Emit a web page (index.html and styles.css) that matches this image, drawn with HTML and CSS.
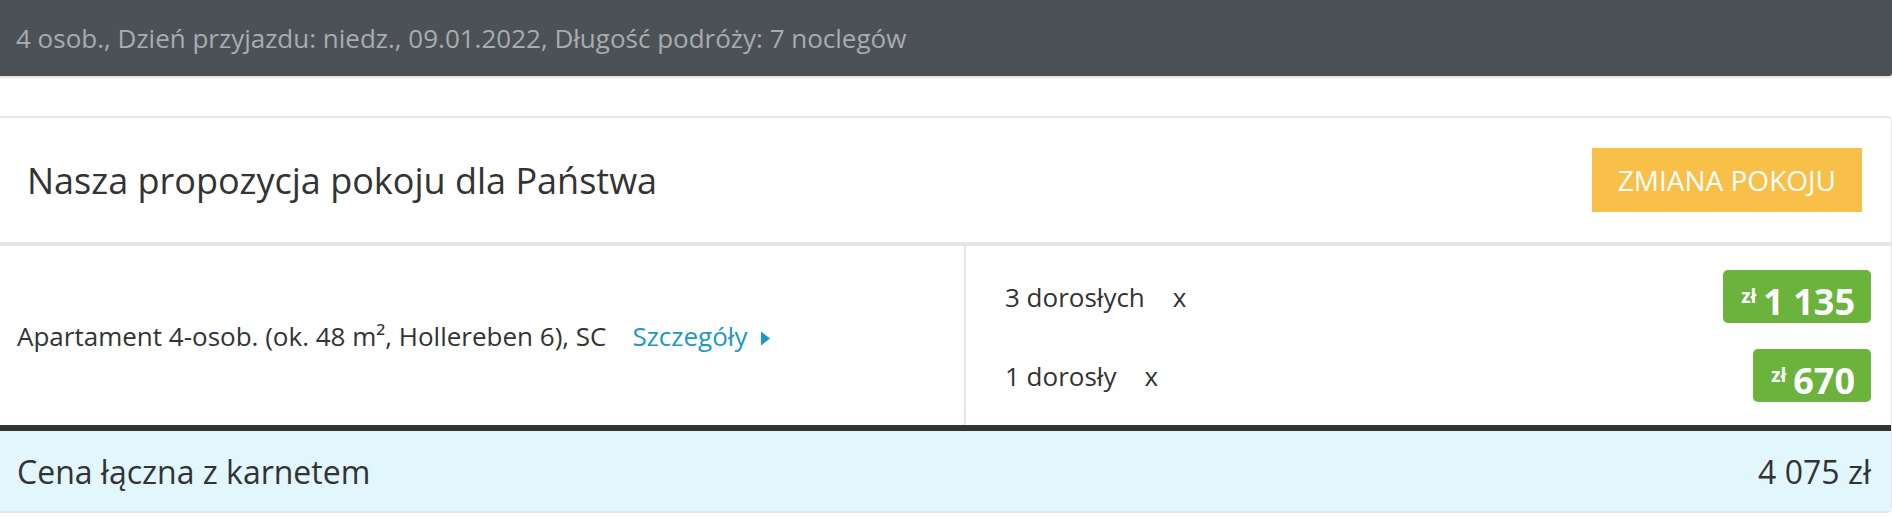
FILE: index.html
```html
<!DOCTYPE html>
<html lang="pl">
<head>
    <meta charset="UTF-8">
    <meta name="viewport" content="width=device-width, initial-scale=1.0">
    <title>Propozycja pokoju</title>
    <link rel="stylesheet" href="styles.css">
</head>
<body>
    <div class="summary-bar">
        4 osob., Dzień przyjazdu: niedz., 09.01.2022, Długość podróży: 7 noclegów
    </div>

    <section class="offer">
        <header class="offer-head">
            <h2 class="offer-title">Nasza propozycja pokoju dla Państwa</h2>
            <button class="btn-change" type="button">ZMIANA POKOJU</button>
        </header>

        <div class="offer-body">
            <div class="room-cell">
                <span class="room-name">Apartament 4-osob. (ok. 48 m², Hollereben 6), SC</span>
                <a class="room-link" href="#">Szczegóły
                    <svg class="caret" width="9" height="15" viewBox="0 0 9 15"><path d="M0 0.5 L9 7.5 L0 14.5 Z" fill="#1e97c6"/></svg>
                </a>
            </div>
            <div class="price-cell">
                <div class="price-row">
                    <span class="guests">3 dorosłych<span class="times">x</span></span>
                    <span class="badge"><span class="cur">zł</span>1 135</span>
                </div>
                <div class="price-row">
                    <span class="guests">1 dorosły<span class="times">x</span></span>
                    <span class="badge"><span class="cur">zł</span>670</span>
                </div>
            </div>
        </div>

        <footer class="offer-total">
            <span>Cena łączna z karnetem</span>
            <span>4 075 zł</span>
        </footer>
    </section>
</body>
</html>
```

FILE: styles.css
```css
* {
    margin: 0;
    padding: 0;
    box-sizing: border-box;
}

body {
    font-family: 'Open Sans', 'Liberation Sans', sans-serif;
    color: #333;
    background: white;
}

.summary-bar {
    height: 76px;
    padding: 0 16px;
    display: flex;
    align-items: center;
    background: #4c5156;
    color: #a7acb0;
    font-size: 26px;
    border-bottom-right-radius: 3px;
    box-shadow: 0 2px 0 #e6e6e6;
}

.offer {
    margin-top: 40px;
    border-top: 2px solid #e6e6e6;
    border-right: 1px solid #e6e6e6;
    border-radius: 0 5px 5px 0;
    overflow: hidden;
}

.offer-head {
    height: 128px;
    padding: 0 29px 0 27px;
    display: flex;
    align-items: center;
    justify-content: space-between;
    border-bottom: 4px solid #e6e6e6;
}

.offer-title {
    font-size: 36px;
    font-weight: 400;
    color: #333;
}

.btn-change {
    height: 64px;
    padding: 0 26px;
    border: none;
    background: #f8c049;
    color: white;
    font-family: inherit;
    font-size: 28px;
}

.offer-body {
    display: flex;
    height: 179px;
}

.room-cell {
    width: 966px;
    padding-left: 17px;
    display: flex;
    align-items: center;
    font-size: 26px;
    border-right: 2px solid #e6e6e6;
}

.room-link {
    margin-left: 26px;
    color: #1e97c6;
    text-decoration: none;
}

.caret {
    margin-left: 7px;
}

.price-cell {
    flex: 1;
    padding: 24px 20px 0 39px;
    display: flex;
    flex-direction: column;
    gap: 26px;
}

.price-row {
    height: 53px;
    display: flex;
    align-items: center;
    justify-content: space-between;
    font-size: 26px;
}

.times {
    margin-left: 28px;
}

.badge {
    height: 53px;
    padding: 0 16px 0 18px;
    line-height: 53px;
    background: #6cb33e;
    color: white;
    font-size: 36px;
    font-weight: 700;
    border-radius: 5px;
}

.cur {
    font-size: 19px;
    vertical-align: 12px;
    margin-right: 7px;
}

.offer-total {
    height: 88px;
    padding: 0 20px 0 17px;
    display: flex;
    align-items: center;
    justify-content: space-between;
    background: #e1f6fd;
    font-size: 32px;
    border-top: 6px solid #333;
    border-bottom: 2px solid #e6e6e6;
}
```
